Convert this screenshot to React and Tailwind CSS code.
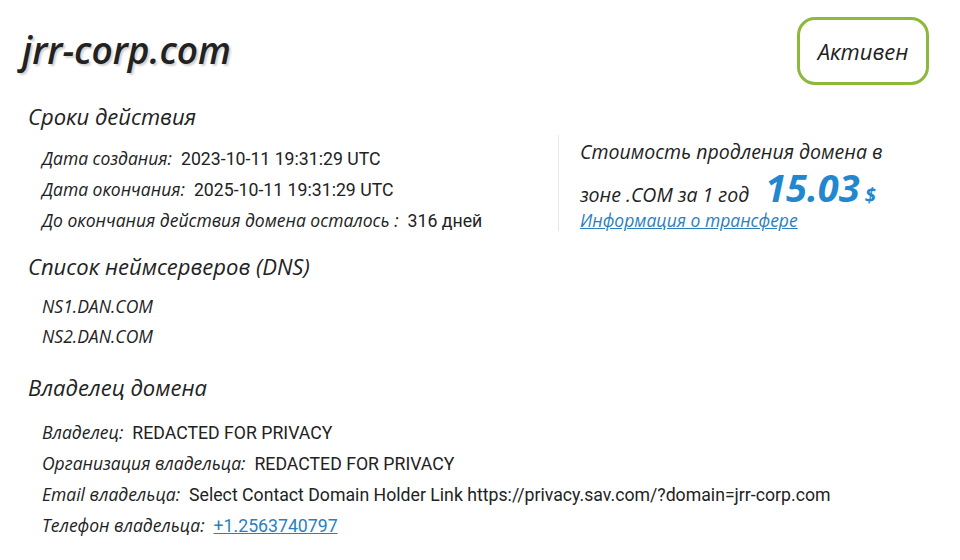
export default function App() {
  const dates = [
    ['Дата создания:', '2023-10-11 19:31:29 UTC'],
    ['Дата окончания:', '2025-10-11 19:31:29 UTC'],
    ['До окончания действия домена осталось :', '316 дней'],
  ];
  const owner = [
    ['Владелец:', 'REDACTED FOR PRIVACY'],
    ['Организация владельца:', 'REDACTED FOR PRIVACY'],
    ['Email владельца:', 'Select Contact Domain Holder Link https://privacy.sav.com/?domain=jrr-corp.com'],
  ];

  const head = "font-['Open_Sans',sans-serif] italic text-[22px] text-[#222] leading-none";
  const label = "font-['Open_Sans',sans-serif] italic font-medium text-[17.5px] text-[#222]";
  const value = "font-['Roboto',sans-serif] text-[17.7px] text-[#222] ml-[9px]";

  return (
    <div className="w-[960px] h-[560px] bg-white overflow-hidden relative">
      <div className="flex items-start justify-between pl-[22px] pr-[31px] pt-[17px]">
        <h1 className="font-['Open_Sans',sans-serif] italic font-semibold text-[37px] text-[#222] leading-none mt-[14px] [text-shadow:2px_2px_2px_rgba(0,0,0,0.18)]">
          jrr-corp.com
        </h1>
        <div className="w-[132px] h-[68px] border-[3px] border-[#8cb93a] rounded-[18px] flex items-center justify-center">
          <span className="font-['Open_Sans',sans-serif] italic font-medium text-[22px] text-[#222]">Активен</span>
        </div>
      </div>

      <div className="pl-[28px] mt-[20px]">
        <h2 className={head}>Сроки действия</h2>
        <div className="flex mt-[18px]">
          <div className="w-[530px] pl-[14px] flex flex-col gap-[9px]">
            {dates.map(([l, v]) => (
              <div key={l} className="flex items-baseline h-[22px]">
                <span className={label}>{l}</span>
                <span className={value}>{v}</span>
              </div>
            ))}
          </div>
          <div className="border-l border-[#e6e6e6] pl-[21px] -mt-[10px] h-[96px]">
            <p className="font-['Open_Sans',sans-serif] italic font-medium text-[19.5px] text-[#222] leading-[34px]">
              Стоимость продления домена в
            </p>
            <p className="font-['Open_Sans',sans-serif] italic font-medium text-[19.5px] text-[#222] leading-[34px] flex items-baseline -mt-[1px]">
              зоне .COM за 1 год
              <span className="font-bold text-[38px] text-[#2287cf] ml-[16px] leading-none">15.03</span>
              <span className="font-bold text-[20px] text-[#2287cf] ml-[5px] leading-none">$</span>
            </p>
            <a href="#" className="font-['Open_Sans',sans-serif] italic font-medium text-[17.5px] text-[#2a7fc0] underline leading-[24px] block -mt-[4px]">
              Информация о трансфере
            </a>
          </div>
        </div>

        <h2 className={head + ' mt-[24px]'}>Список неймсерверов (DNS)</h2>
        <div className="pl-[14px] mt-[18px] flex flex-col gap-[8px]">
          <div className={label + ' h-[22px] leading-[22px]'}>NS1.DAN.COM</div>
          <div className={label + ' h-[22px] leading-[22px]'}>NS2.DAN.COM</div>
        </div>

        <h2 className={head + ' mt-[29px]'}>Владелец домена</h2>
        <div className="pl-[14px] mt-[21px] flex flex-col gap-[9px]">
          {owner.map(([l, v]) => (
            <div key={l} className="flex items-baseline h-[22px]">
              <span className={label}>{l}</span>
              <span className={value}>{v}</span>
            </div>
          ))}
          <div className="flex items-baseline h-[22px]">
            <span className={label}>Телефон владельца:</span>
            <a href="#" className="font-['Roboto',sans-serif] text-[17.7px] text-[#2a7fc0] underline ml-[9px]">+1.2563740797</a>
          </div>
        </div>
      </div>
    </div>
  );
}
